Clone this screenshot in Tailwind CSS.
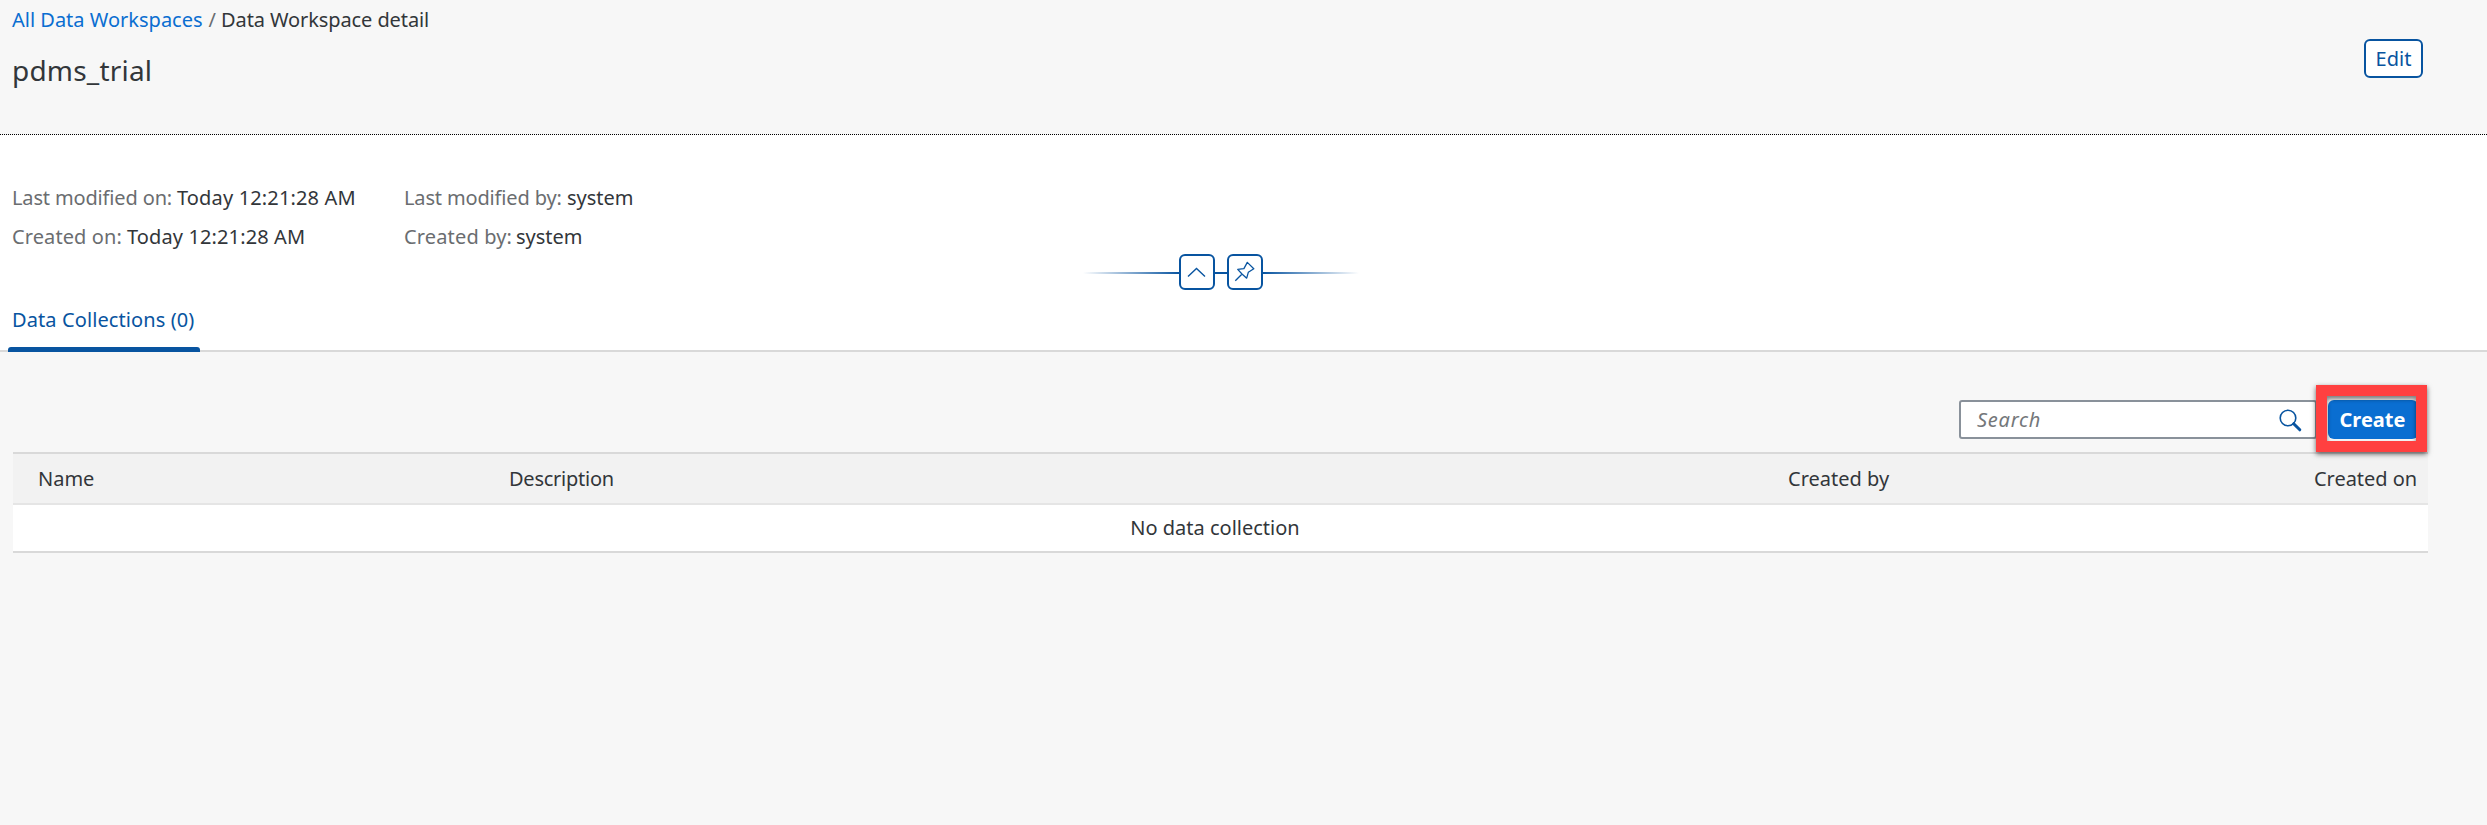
<!DOCTYPE html>
<html lang="en">
<head>
<meta charset="utf-8">
<title>Data Workspace detail</title>
<script src="https://cdn.jsdelivr.net/npm/@tailwindcss/browser@4"></script>
</head>
<body class="h-[825px] overflow-hidden bg-[#f7f7f7] font-['Noto_Sans',sans-serif] text-[20px] leading-6 whitespace-nowrap text-[#32363a]">
  <header class="flex h-[135px] justify-between border-b border-dotted border-black pr-16 pl-3">
    <div class="pt-2">
      <nav class="flex">
        <a class="text-[#0a6ed1]">All Data Workspaces</a>
        <span class="ml-[6px] text-[#6a6d70]">/</span>
        <span class="ml-[5px] tracking-[-0.1px]">Data Workspace detail</span>
      </nav>
      <h1 class="mt-5 text-[28px] leading-9 tracking-[0.2px]">pdms_trial</h1>
    </div>
    <button class="mt-[39px] h-[39px] w-[59px] rounded-md border-2 border-[#0854a0] bg-white leading-6 text-[#0854a0]">Edit</button>
  </header>

  <section class="h-[217px] border-b-2 border-[#d9d9d9] bg-white">
    <div class="flex h-[119px] pt-[51px] pl-3">
      <dl class="flex w-[392px] flex-col gap-[15px]">
        <div class="flex"><dt class="w-[165px] tracking-[-0.15px] text-[#6a6d70]">Last modified on:</dt><dd class="tracking-[0.15px]">Today 12:21:28 AM</dd></div>
        <div class="flex"><dt class="w-[115px] tracking-[0.1px] text-[#6a6d70]">Created on:</dt><dd class="tracking-[0.12px]">Today 12:21:28 AM</dd></div>
      </dl>
      <dl class="flex flex-col gap-[15px]">
        <div class="flex"><dt class="w-[163px] tracking-[-0.15px] text-[#6a6d70]">Last modified by:</dt><dd>system</dd></div>
        <div class="flex"><dt class="w-[112px] tracking-[0.15px] text-[#6a6d70]">Created by:</dt><dd>system</dd></div>
      </dl>
    </div>
    <div class="ml-[1083px] flex h-9 w-[276px] items-center">
      <div class="mt-[2px] h-[2px] w-24 bg-linear-to-r from-[#0854a0]/0 to-[#0854a0]"></div>
      <button class="h-9 w-9 rounded-[6px] border-2 border-[#0854a0] bg-white">
        <svg class="h-8 w-8" viewBox="0 0 32 32" fill="none" stroke="#0854a0" stroke-width="1.4"><path d="M7 20.5 15.5 12.5 24 20.5"/></svg>
      </button>
      <div class="mt-[2px] h-[2px] w-3 bg-[#0854a0]"></div>
      <button class="h-9 w-9 rounded-[6px] border-2 border-[#0854a0] bg-white">
        <svg class="h-8 w-8" viewBox="0 0 32 32" fill="none" stroke="#0854a0" stroke-width="1.3" stroke-linejoin="round"><path d="M6.3 24.7 12.8 18.2M18.3 6.4 24.8 12.8 19.3 16.3 17.7 22.2 13 18 8.7 13.4 14.9 12.6Z"/></svg>
      </button>
      <div class="mt-[2px] h-[2px] w-24 bg-linear-to-r from-[#0854a0] to-[#0854a0]/0"></div>
    </div>
    <div class="ml-2 flex h-[62px] w-48 flex-col justify-between">
      <span class="mt-[18px] ml-1 tracking-[0.1px] text-[#0854a0]">Data Collections (0)</span>
      <div class="h-[5px] shrink-0 rounded-t-[3px] bg-[#0854a0]"></div>
    </div>
  </section>

  <main class="mr-[59px] ml-[13px]">
    <div class="relative flex h-[100px] justify-end pt-12 pr-[10px]">
      <div class="flex h-[39px] w-[358px] items-center justify-between rounded-[3px] border-2 border-[#89919a] bg-white pr-[13px] pl-4">
        <span class="pt-px tracking-[0.75px] text-[#74777a] italic">Search</span>
        <svg class="h-6 w-6" viewBox="0 0 24 24" fill="none" stroke="#0854a0"><circle cx="10" cy="10" r="7.8" stroke-width="1.6"/><path d="M15.7 15.7 21.8 21.8" stroke-width="3" stroke-linecap="round"/></svg>
      </div>
      <button class="ml-[11px] h-[39px] w-[90px] rounded-md bg-[#0a6ed1] pt-px pr-px font-bold text-white">Create</button>
      <div class="absolute top-[33px] right-px h-[67px] w-[111px] border-[11px] border-[#ff4040] shadow-[0_2px_5px_rgba(0,0,0,0.6),inset_0_3px_4px_rgba(0,0,0,0.5)]"></div>
    </div>
    <table class="w-full table-fixed border-collapse">
      <thead>
        <tr class="h-[51px] border-t-2 border-b-2 border-t-[#d9d9d9] border-b-[#e5e5e5] bg-[#f2f2f2]">
          <th class="w-[471px] p-0 pt-px pl-[25px] text-left font-normal">Name</th>
          <th class="w-[1279px] p-0 pt-px pl-[25px] text-left font-normal tracking-[-0.25px]">Description</th>
          <th class="w-[430px] p-0 pt-px pl-[25px] text-left font-normal">Created by</th>
          <th class="p-0 pt-px pr-[11px] text-right font-normal tracking-[-0.05px]">Created on</th>
        </tr>
      </thead>
      <tbody>
        <tr class="h-12 border-b-2 border-b-[#d9d9d9] bg-white"><td colspan="4" class="p-0 pr-[11px] text-center">No data collection</td></tr>
      </tbody>
    </table>
  </main>
</body>
</html>
